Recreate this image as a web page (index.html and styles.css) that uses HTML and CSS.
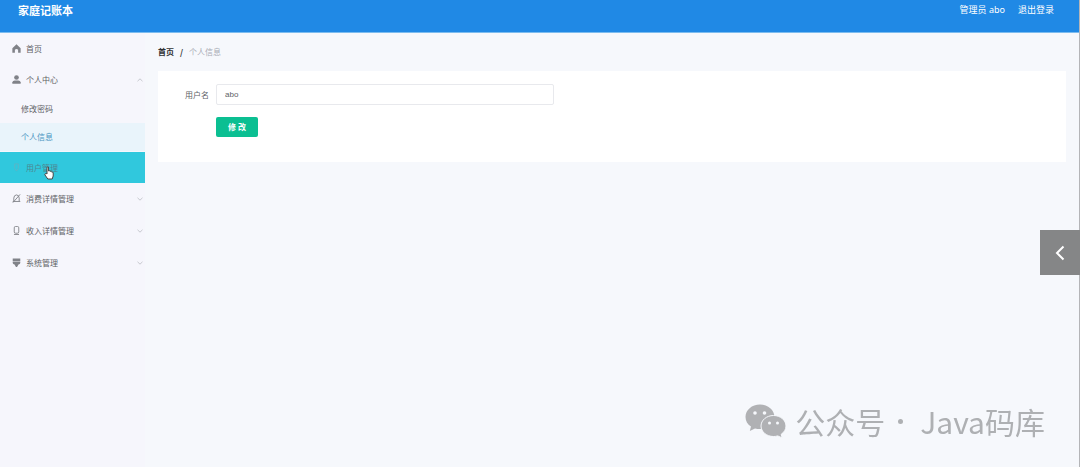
FILE: index.html
```html
<!DOCTYPE html>
<html lang="zh-CN">
<head>
    <meta charset="UTF-8">
    <meta name="viewport" content="width=device-width, initial-scale=1.0">
    <title>家庭记账本</title>
    <link rel="stylesheet" href="styles.css">
</head>
<body>
    <header class="header">
        <h1 class="title">家庭记账本</h1>
        <div class="user-bar">
            <span>管理员 abo</span>
            <a href="#">退出登录</a>
        </div>
    </header>

    <div class="container">
        <nav class="sidebar">
            <ul class="menu">
                <li>
                    <a class="menu-item" href="#">
                        <svg class="icon" viewBox="0 0 10 10"><path fill="currentColor" d="M5 .4 9.6 4.6V9.800H6.800V6.400Q5 4.600 3.200 6.400V9.800H.4V4.600z"/></svg>
                        <span>首页</span>
                    </a>
                </li>
                <li class="group">
                    <a class="menu-item" href="#">
                        <svg class="icon" viewBox="0 0 10 10"><circle cx="5" cy="2.800" r="2.600" fill="currentColor"/><path fill="currentColor" d="M.4 9.600V8Q.8 6.200 3 6.200H7Q9.200 6.200 9.600 8V9.600z"/></svg>
                        <span>个人中心</span>
                        <svg class="arrow" viewBox="0 0 6 4"><path d="M.5 3.2 3 .8 5.5 3.2"/></svg>
                    </a>
                    <ul class="submenu">
                        <li><a class="sub-item" href="#">修改密码</a></li>
                        <li><a class="sub-item active" href="#">个人信息</a></li>
                    </ul>
                </li>
                <li>
                    <a class="menu-item hover" href="#">
                        <svg class="icon line" viewBox="0 0 10 10"><path d="M3 1H7V6L5 9 3 6z"/></svg>
                        <span>用户管理</span>
                        <svg class="cursor" viewBox="0 0 10 14"><path d="M3 8V2Q3 .8 3.8 .8T4.6 2V5Q5.6 4.5 6.2 5.3 7.2 5 7.7 5.9 9 5.6 9.2 7V10L8.2 13H3.8L1 9Q.5 7.8 1.5 7.5 2.3 7.3 3 8z"/></svg>
                    </a>
                </li>
                <li class="group">
                    <a class="menu-item" href="#">
                        <svg class="icon line" viewBox="0 0 10 10"><path d="M2 8V4.500Q2.200 1.200 5 1 7.800 1.200 8 4.500V8M.8 8.300H9.200M1 9.600 9 .4"/></svg>
                        <span>消费详情管理</span>
                        <svg class="arrow" viewBox="0 0 6 4"><path d="M.5 .8 3 3.2 5.5 .8"/></svg>
                    </a>
                </li>
                <li class="group">
                    <a class="menu-item" href="#">
                        <svg class="icon line" viewBox="0 0 10 10"><rect x="2.500" y=".5" width="5" height="7.500" rx="1.500"/><path d="M2.200 9.400H7.800"/></svg>
                        <span>收入详情管理</span>
                        <svg class="arrow" viewBox="0 0 6 4"><path d="M.5 .8 3 3.2 5.5 .8"/></svg>
                    </a>
                </li>
                <li class="group">
                    <a class="menu-item" href="#">
                        <svg class="icon" viewBox="0 0 10 10"><path fill="currentColor" d="M.8 .6H9.200V3.600H.8zM.8 4.100H9.200V5.600Q9 7 7.200 7.200L5.600 10H4.400L2.800 7.200Q1 7 .8 5.600z"/></svg>
                        <span>系统管理</span>
                        <svg class="arrow" viewBox="0 0 6 4"><path d="M.5 .8 3 3.2 5.5 .8"/></svg>
                    </a>
                </li>
            </ul>
        </nav>

        <main class="main">
            <div class="breadcrumb">
                <a href="#">首页</a>
                <b>/</b>
                <span>个人信息</span>
            </div>
            <form class="card">
                <div class="form-row">
                    <label for="username">用户名</label>
                    <input type="text" id="username" value="abo">
                </div>
                <button type="button" class="submit">修 改</button>
            </form>
        </main>
    </div>

    <button type="button" class="drawer" aria-label="展开">
        <svg viewBox="0 0 10 16"><path d="M8.500 1.500 2 8 8.500 14.500"/></svg>
    </button>

    <div class="watermark">
        <svg viewBox="0 0 42 34">
            <path fill="#b0b1b4" d="M15 .5C6.800 .5 .5 6 .5 13c0 4 2 7.300 5.500 9.600L4.800 27l5.200-2.600c1.600 .5 3.300 .7 5 .7 8.200 0 14.500-5.300 14.500-12.100S23.200 .5 15 .5z"/>
            <path fill="#b0b1b4" stroke="#f6f8fc" d="M28.500 11.500C21.600 11.500 16 16.200 16 22s5.600 10.500 12.500 10.500c1.500 0 2.900-.2 4.200-.6l4.500 2-1-3.600c3-2 4.800-5 4.800-8.300 0-5.800-5.600-10.500-12.500-10.500z"/>
            <g fill="#f6f8fc"><circle cx="10" cy="9" r="1.800"/><circle cx="19.500" cy="9" r="1.800"/><circle cx="24.500" cy="19" r="1.500"/><circle cx="32.500" cy="19" r="1.500"/></g>
        </svg>
        <span>公众号</span>
        <i class="dot"></i>
        <span>Java码库</span>
    </div>
</body>
</html>
```
FILE: styles.css
```css
* {
    box-sizing: border-box;
}
body {
    display: flex;
    flex-direction: column;
    margin: 0;
    min-height: 100vh;
    font-family: "Noto Sans CJK SC", sans-serif;
    font-size: 8px;
    line-height: 12px;
    color: #606266;
    background: #f6f8fc;
    border-right: 1px solid #b4b5b8;
}
a {
    color: inherit;
    text-decoration: none;
}
ul {
    list-style: none;
    margin: 0;
    padding: 0;
}
.header {
    display: flex;
    justify-content: space-between;
    align-items: flex-start;
    height: 33px;
    padding: 2px 25px 0 18px;
    color: #fff;
    background: #2089e5;
    border-bottom: 1px solid #7cbcef;
}
.title {
    margin: 0;
    font-size: 11px;
    line-height: 16px;
}
.user-bar {
    display: flex;
    gap: 13px;
    font-family: "Noto Sans", "Noto Sans CJK SC", sans-serif;
    font-size: 9px;
    line-height: 16px;
}
.container {
    display: flex;
    flex: 1;
}
.sidebar {
    width: 145px;
    flex-shrink: 0;
    background: #f6f6fc;
}
.menu-item {
    position: relative;
    display: flex;
    align-items: center;
    gap: 5px;
    height: 31px;
    padding: 0 2px 0 12px;
}
.menu-item.hover {
    color: #4d8791;
    background: #30c8dd;
}
.group {
    margin-bottom: 1px;
}
.icon {
    width: 9px;
    height: 9px;
    color: #808288;
}
.line {
    fill: none;
    stroke: currentColor;
}
.hover .icon {
    color: #5fb4c4;
}
.arrow {
    width: 6px;
    height: 4px;
    margin-left: auto;
    fill: none;
    stroke: #c6c8ce;
}
.cursor {
    position: absolute;
    left: 44px;
    top: 14px;
    width: 10px;
    height: 14px;
    fill: #fff;
    stroke: #444;
}
.sub-item {
    display: block;
    padding: 0 21px;
    line-height: 28px;
}
.sub-item.active {
    color: #4a94c2;
    background: #e9f4fb;
}
.main {
    flex: 1;
    padding: 13px;
}
.breadcrumb {
    display: flex;
    gap: 6px;
    margin-bottom: 13px;
    color: #a9acb5;
}
.breadcrumb a,
.breadcrumb b {
    font-weight: bold;
    color: #303133;
}
.card {
    padding: 13px 36px 25px 27px;
    background: #fff;
}
.form-row {
    display: flex;
    align-items: center;
    margin-bottom: 12px;
}
.form-row label {
    width: 31px;
}
.form-row input {
    width: 40%;
    height: 21px;
    padding: 0 8px;
    font: inherit;
    font-family: "Liberation Sans", "Noto Sans CJK SC", sans-serif;
    color: #606266;
    background: #fff;
    border: 1px solid #e8e9ed;
    border-radius: 2px;
}
.submit {
    display: block;
    width: 42px;
    height: 20px;
    margin-left: 31px;
    padding: 0;
    font: inherit;
    font-weight: bold;
    color: #fff;
    background: #0bbf92;
    border: 0;
    border-radius: 2px;
}
.drawer {
    position: fixed;
    right: 0;
    top: 230px;
    display: flex;
    align-items: center;
    justify-content: center;
    width: 40px;
    height: 45px;
    padding: 0;
    background: #858687;
    border: 0;
}
.drawer svg {
    width: 10px;
    height: 16px;
    fill: none;
    stroke: #fff;
    stroke-width: 2;
}
.watermark {
    position: fixed;
    right: 35px;
    bottom: 26px;
    display: flex;
    align-items: center;
    font-size: 30px;
    line-height: 40px;
    color: #aeb0b3;
}
.watermark svg {
    width: 42px;
    height: 34px;
    margin-right: 8px;
}
.dot {
    width: 5px;
    height: 5px;
    margin: 0 17px 0 13px;
    border-radius: 50%;
    background: #aeb0b3;
}
```
